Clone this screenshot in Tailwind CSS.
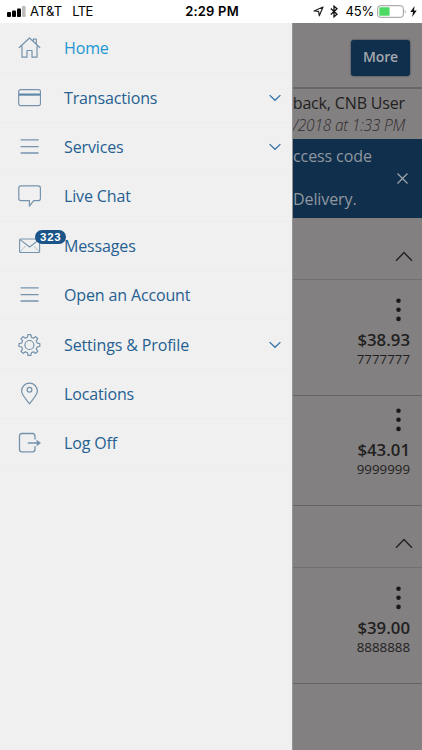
<!DOCTYPE html>
<html lang="en">
<head>
<meta charset="utf-8">
<title>Accounts</title>
<script src="https://cdn.jsdelivr.net/npm/@tailwindcss/browser@4"></script>
</head>
<body class="w-[422px] h-[750px] overflow-hidden bg-white font-['Open_Sans',sans-serif] flex flex-col">
<header class="h-[23px] shrink-0 grid grid-cols-[1fr_auto_1fr] items-center px-[7px] pr-[5px] text-[13px] leading-[23px] text-black font-['Inter',sans-serif]">
  <div class="flex items-center">
    <svg class="w-[19px] h-[12px] mr-[4px]" viewBox="0 0 19 12"><g fill="#000"><rect x="0" y="6" width="4" height="5" rx="1"/><rect x="5" y="4.5" width="4" height="6.5" rx="1"/><rect x="10" y="2.5" width="4" height="8.5" rx="1"/></g><rect x="15" y="0" width="3.6" height="11" rx="1" fill="#bbb"/></svg>
    <span class="tracking-[0.1px]">AT&amp;T</span><span class="ml-[10px] tracking-[-0.6px]">LTE</span>
  </div>
  <div class="font-semibold text-[13px] tracking-[0.2px]">2:29 PM</div>
  <div class="flex items-center justify-end">
    <svg class="w-[11px] h-[11px] mr-[6px]" viewBox="0 0 11 11" fill="none" stroke="#222" stroke-width="1.2" stroke-linejoin="round"><path d="M10 1L6.3 9.8L5.6 5.4L1 5Z"/></svg>
    <svg class="w-[8px] h-[13px] mr-[8px]" viewBox="0 0 8 13" fill="none" stroke="#111" stroke-width="1.3"><path d="M.8 3.6L7 9.2L4 11.8V1.2L7 3.8L.8 9.4"/></svg>
    <span class="tracking-[-0.2px]">45%</span>
    <svg class="w-[30px] h-[13px] ml-[3px] mr-[3px]" viewBox="0 0 30 13"><rect x=".7" y=".7" width="25.6" height="11.6" rx="2.5" fill="#fff" stroke="#999"/><rect x="2.3" y="2.3" width="10.3" height="8.4" rx=".6" fill="#4cd964"/><path d="M27.8 4.5q1.4 2 0 4z" fill="#888"/></svg>
    <svg class="w-[7px] h-[11px]" viewBox="0 0 7 11"><path d="M4.6 0L.3 6.1H3L2.2 11L6.7 4.5H4z" fill="#111"/></svg>
  </div>
</header>
<div class="flex flex-1 min-h-0">
  <nav class="w-[292px] shrink-0 bg-[#f0f0f0] text-[#265f92] text-[16px] leading-[22px] tracking-[-0.14px]">
    <a class="h-[49.4px] flex items-center pl-[17px] pr-[11px] text-[#2196d3]">
      <svg class="w-6 h-6 mr-[23px]" viewBox="0 0 24 24" fill="none" stroke="#7593ad" stroke-width="1.2" stroke-linejoin="round" stroke-linecap="round"><path d="M2.3 11.5L12.5 2L22.8 11.5M5 10V21.2H10V14.5H15V21.2H20V10M16.3 4.7V3.2H19.3V7.8"/></svg>
      <span>Home</span></a>
    <a class="h-[49.4px] flex items-center pl-[17px] pr-[11px] border-t border-[#ededed]">
      <svg class="w-6 h-6 mr-[23px]" viewBox="0 0 24 24" fill="none" stroke="#7593ad" stroke-width="1.2"><rect x="1.7" y="3.7" width="21.8" height="16" rx="2"/><path d="M2 8.6H23.3" stroke="#5f88a9" stroke-width="2.2"/></svg>
      <span class="grow">Transactions</span>
      <svg class="w-3 h-2" viewBox="0 0 12 8" fill="none" stroke="#3373a8" stroke-width="1.3"><path d="M.6 1.1L6 6.3L11.4 1.1"/></svg></a>
    <a class="h-[49.4px] flex items-center pl-[17px] pr-[11px] border-t border-[#ededed]">
      <svg class="w-6 h-6 mr-[23px]" viewBox="0 0 24 24" fill="none" stroke="#7593ad" stroke-width="1.3"><path d="M3.6 4.8H21.6M3.6 11.6H21.6M3.6 18H21.6"/></svg>
      <span class="grow">Services</span>
      <svg class="w-3 h-2" viewBox="0 0 12 8" fill="none" stroke="#3373a8" stroke-width="1.3"><path d="M.6 1.1L6 6.3L11.4 1.1"/></svg></a>
    <a class="h-[49.4px] flex items-center pl-[17px] pr-[11px] border-t border-[#ededed]">
      <svg class="w-6 h-6 mr-[23px]" viewBox="0 0 24 24" fill="none" stroke="#7593ad" stroke-width="1.2" stroke-linejoin="round"><path d="M4 1.8H21.2Q23.4 1.8 23.4 4V14.4Q23.4 16.6 21.2 16.6H16.8L12.4 22V16.6H4Q1.8 16.6 1.8 14.4V4Q1.8 1.8 4 1.8Z"/></svg>
      <span>Live Chat</span></a>
    <a class="relative h-[49.4px] flex items-center pl-[17px] pr-[11px] border-t border-[#ededed]">
      <svg class="w-6 h-6 mr-[23px]" viewBox="0 0 24 24" fill="none" stroke="#7593ad" stroke-width="1.1" stroke-linejoin="round"><rect x="2.6" y="5" width="20" height="13.5" rx="1"/><path d="M3 5.6L12.6 13L22.2 5.6"/><path d="M3 18L8.4 12M22.2 18L16.8 12" stroke-width=".5"/></svg>
      <span class="absolute left-[35px] top-[8px] w-[30.5px] h-[14px] rounded-full bg-[#1b5488] text-white text-[11.5px] leading-[14px] font-bold text-center tracking-[0.8px] pl-px font-['Liberation_Sans',sans-serif]">323</span>
      <span>Messages</span></a>
    <a class="h-[49.4px] flex items-center pl-[17px] pr-[11px] border-t border-[#ededed]">
      <svg class="w-6 h-6 mr-[23px]" viewBox="0 0 24 24" fill="none" stroke="#7593ad" stroke-width="1.3"><path d="M3.6 4.8H21.6M3.6 11.6H21.6M3.6 18H21.6"/></svg>
      <span>Open an Account</span></a>
    <a class="h-[49.4px] flex items-center pl-[17px] pr-[11px] border-t border-[#ededed]">
      <svg class="w-6 h-6 mr-[23px]" viewBox="-12.4 -12 24 24" fill="none" stroke="#7593ad" stroke-width="1.2" stroke-linejoin="round"><path d="M-1.94 -7.76L-1.5 -10.4H1.5L1.94 -7.76L4.12 -6.86L6.29 -8.41L8.41 -6.29L6.86 -4.12L7.76 -1.94L10.4 -1.5V1.5L7.76 1.94L6.86 4.12L8.41 6.29L6.29 8.41L4.12 6.86L1.94 7.76L1.5 10.4H-1.5L-1.94 7.76L-4.12 6.86L-6.29 8.41L-8.41 6.29L-6.86 4.12L-7.76 1.94L-10.4 1.5V-1.5L-7.76 -1.94L-6.86 -4.12L-8.41 -6.29L-6.29 -8.41L-4.12 -6.86Z"/><circle r="4.5"/></svg>
      <span class="grow">Settings &amp; Profile</span>
      <svg class="w-3 h-2" viewBox="0 0 12 8" fill="none" stroke="#3373a8" stroke-width="1.3"><path d="M.6 1.1L6 6.3L11.4 1.1"/></svg></a>
    <a class="h-[49.4px] flex items-center pl-[17px] pr-[11px] border-t border-[#ededed]">
      <svg class="w-6 h-6 mr-[23px]" viewBox="0 0 24 24" fill="none" stroke="#7593ad" stroke-width="1.2" stroke-linejoin="round"><path d="M12.5 21.9C9.5 17.5 4.6 13 4.6 9.1a7.9 7.9 0 0 1 15.8 0C20.4 13 15.5 17.5 12.5 21.9Z"/><circle cx="12.5" cy="7.8" r="2.4"/></svg>
      <span>Locations</span></a>
    <a class="h-[50.4px] flex items-center pl-[17px] pr-[11px] border-y border-[#ededed]">
      <svg class="w-6 h-6 mr-[23px]" viewBox="0 0 24 24" fill="none" stroke="#7593ad" stroke-width="1.3"><path d="M18 8.6V5Q18 2.5 15.5 2.5H5Q2.5 2.5 2.5 5V18.2Q2.5 20.8 5 20.8H15.5Q18 20.8 18 18.2V15.2M10.8 12H22"/><path d="M19.6 8.8L24 12L19.6 15.2Z" fill="#7593ad" stroke="none"/></svg>
      <span>Log Off</span></a>
  </nav>
  <main class="w-[130px] overflow-hidden bg-[#838081] text-[#211f20] flex flex-col border-l border-[#969495]">
    <div class="h-[66px] shrink-0 border-b-2 border-[#6a6768] pt-[17px] pl-[58px]">
      <button class="block w-[59px] h-[36px] rounded-[3px] bg-[#102f4d] text-[#a4a8ad] text-[14px] leading-[32px] font-semibold tracking-[-0.1px] pb-[2px] shadow-[0_0_2px_#234]">More</button>
    </div>
    <div class="h-[50px] shrink-0 pr-[17px] flex flex-col items-end whitespace-nowrap">
      <div class="text-[16px] leading-[22px] mt-[3px] tracking-[-0.16px]">back, CNB User</div>
      <div class="text-[15.5px] leading-[22px] italic font-light tracking-[-0.2px] text-[#2f2d2e]">/2018 at 1:33 PM</div>
    </div>
    <div class="h-[79px] shrink-0 bg-[#102f4d] text-[#8f979f] text-[16px] tracking-[-0.1px] flex justify-between items-center pr-[13px]">
      <div class="leading-[43px] self-start -mt-[4px]"><div>ccess code</div><div>Delivery.</div></div>
      <svg class="w-[13px] h-[13px] -ml-8 -mt-px" viewBox="0 0 13 13" stroke="#a0a6ac" stroke-width="1.2"><path d="M1.5 1.5L11.5 11.5M11.5 1.5L1.5 11.5"/></svg>
    </div>
    <div class="h-[62px] shrink-0 border-b border-[#716e6f] flex items-center justify-end pr-[9px] pt-[15px]">
      <svg class="w-[18px] h-[11px]" viewBox="0 0 18 11" fill="none" stroke="#222" stroke-width="1.4"><path d="M1 9.8L9 1.6L17 9.8"/></svg>
    </div>
    <div class="h-[116px] shrink-0 border-b border-[#656263] flex flex-col items-end pr-[12px] pt-[18px]">
      <svg class="w-[5px] h-[24px] mr-[9.5px]" viewBox="0 0 5 24" fill="#1b191a"><circle cx="2.5" cy="2.7" r="2.3"/><circle cx="2.5" cy="11.8" r="2.3"/><circle cx="2.5" cy="20.9" r="2.3"/></svg>
      <div class="text-[16.8px] leading-[20px] font-semibold mt-[8px]">$38.93</div>
      <div class="text-[13.3px] leading-[18px]">7777777</div>
    </div>
    <div class="h-[110px] shrink-0 border-b border-[#656263] flex flex-col items-end pr-[12px] pt-[12px]">
      <svg class="w-[5px] h-[24px] mr-[9.5px]" viewBox="0 0 5 24" fill="#1b191a"><circle cx="2.5" cy="2.7" r="2.3"/><circle cx="2.5" cy="11.8" r="2.3"/><circle cx="2.5" cy="20.9" r="2.3"/></svg>
      <div class="text-[16.8px] leading-[20px] font-semibold mt-[8px]">$43.01</div>
      <div class="text-[13.3px] leading-[18px]">9999999</div>
    </div>
    <div class="h-[62px] shrink-0 border-b border-[#716e6f] flex items-center justify-end pr-[9px] pt-[14px]">
      <svg class="w-[18px] h-[11px]" viewBox="0 0 18 11" fill="none" stroke="#222" stroke-width="1.4"><path d="M1 9.8L9 1.6L17 9.8"/></svg>
    </div>
    <div class="h-[116px] shrink-0 border-b border-[#656263] flex flex-col items-end pr-[12px] pt-[18px]">
      <svg class="w-[5px] h-[24px] mr-[9.5px]" viewBox="0 0 5 24" fill="#1b191a"><circle cx="2.5" cy="2.7" r="2.3"/><circle cx="2.5" cy="11.8" r="2.3"/><circle cx="2.5" cy="20.9" r="2.3"/></svg>
      <div class="text-[16.8px] leading-[20px] font-semibold mt-[8px]">$39.00</div>
      <div class="text-[13.3px] leading-[18px]">8888888</div>
    </div>
  </main>
</div>
</body>
</html>
